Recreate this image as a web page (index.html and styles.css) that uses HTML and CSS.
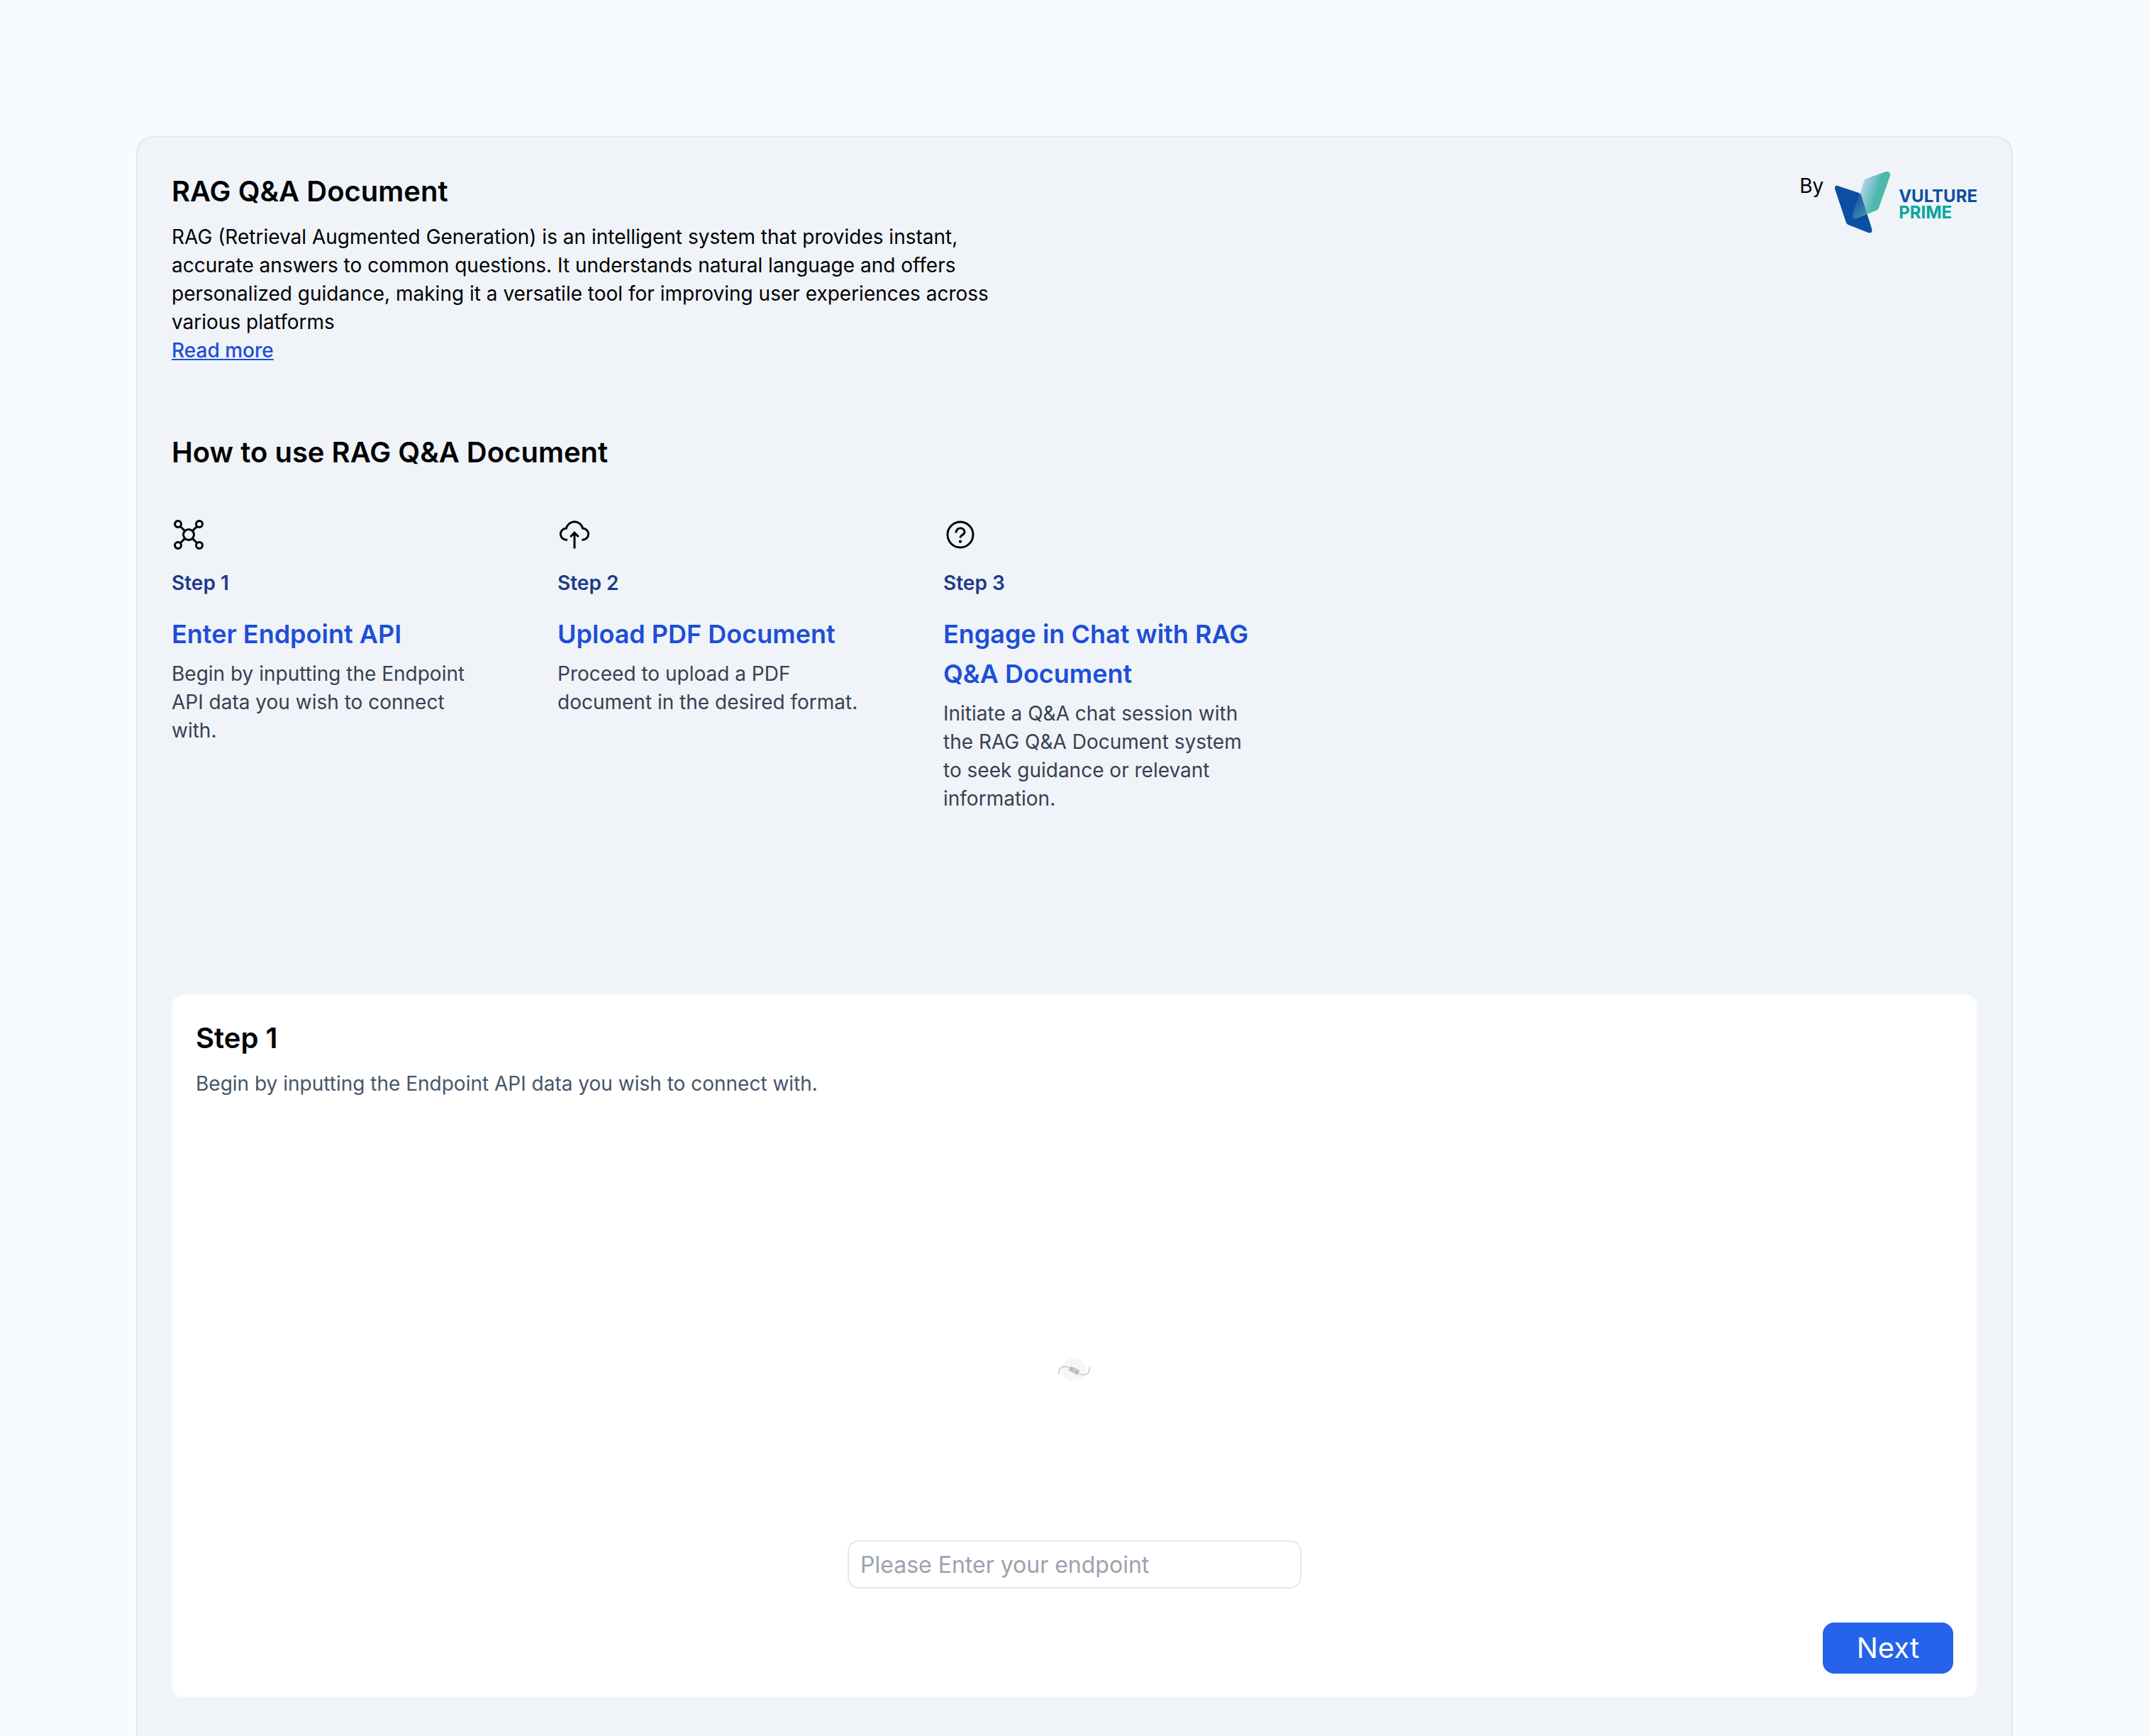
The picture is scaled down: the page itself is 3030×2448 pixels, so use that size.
FILE: index.html
```html
<!DOCTYPE html>
<html lang="en">
<head>
<meta charset="utf-8">
<meta name="viewport" content="width=device-width, initial-scale=1">
<title>RAG Q&amp;A Document</title>
<link rel="stylesheet" href="styles.css">
</head>
<body>
<div class="page">
  <main class="card">
    <header class="intro">
      <div class="intro-text">
        <h1 class="title">RAG Q&amp;A Document</h1>
        <p>RAG (Retrieval Augmented Generation) is an intelligent system that provides instant, accurate answers to common questions. It understands natural language and offers personalized guidance, making it a versatile tool for improving user experiences across various platforms</p>
        <a class="read-more" href="#">Read more</a>
      </div>
      <div class="byline">
        <span>By</span>
        <a class="brand" href="#" aria-label="Vulture Prime">
          <svg class="brand-mark" viewBox="0 0 78 87" aria-hidden="true">
            <defs>
              <linearGradient id="wing" gradientUnits="userSpaceOnUse" x1="36" y1="28" x2="58" y2="35">
                <stop offset="0" stop-color="#b4d0ea"/>
                <stop offset="1" stop-color="#4fb7ae"/>
              </linearGradient>
              <linearGradient id="overlap" gradientUnits="userSpaceOnUse" x1="30" y1="45" x2="46" y2="58">
                <stop offset="0" stop-color="#2360a8"/>
                <stop offset="1" stop-color="#3a8fa8"/>
              </linearGradient>
              <clipPath id="blue-shape">
                <path d="M4 20 34 30Q36 31 37 33L52 80Q54 88 47 86L19 75Q17 74 16 72L0 24Q0 19 4 20Z"/>
              </clipPath>
            </defs>
            <path fill="#0b4fa2" d="M4 20 34 30Q36 31 37 33L52 80Q54 88 47 86L19 75Q17 74 16 72L0 24Q0 19 4 20Z"/>
            <path fill="url(#wing)" d="M44 10 72 0Q79 -1 78 6L62 51Q61 54 58 55L30 66Q24 67 26 60L41 14Q42 11 44 10Z"/>
            <path fill="url(#overlap)" clip-path="url(#blue-shape)" d="M44 10 72 0Q79 -1 78 6L62 51Q61 54 58 55L30 66Q24 67 26 60L41 14Q42 11 44 10Z"/>
          </svg>
          <span class="brand-name">VULTURE<span class="brand-second">PRIME</span></span>
        </a>
      </div>
    </header>

    <section class="guide">
      <h2 class="title">How to use RAG Q&amp;A Document</h2>
      <ol class="steps">
        <li class="step">
          <svg class="icon" viewBox="0 0 24 24" aria-hidden="true">
            <circle cx="12" cy="12" r="3.75"/>
            <circle cx="4.5" cy="4.5" r="2.25"/><circle cx="19.5" cy="4.5" r="2.25"/>
            <circle cx="4.5" cy="19.5" r="2.25"/><circle cx="19.5" cy="19.5" r="2.25"/>
            <path d="M6.1 6.1 9.3 9.3M17.9 6.1 14.7 9.3M6.1 17.9 9.3 14.7M17.9 17.9 14.7 14.7"/>
          </svg>
          <span class="step-label">Step 1</span>
          <h3 class="step-title">Enter Endpoint API</h3>
          <p class="step-text">Begin by inputting the Endpoint API data you wish to connect with.</p>
        </li>
        <li class="step">
          <svg class="icon" viewBox="0 0 24 24" aria-hidden="true">
            <path d="M7 15.6h-.7a4.05 4.05 0 0 1-.1-8.1A5.95 5.95 0 0 1 17.8 7.5a4.05 4.05 0 0 1-.1 8.1H17.2M12 21.8V10.6M9.1 13.5 12 10.6l2.9 2.9"/>
          </svg>
          <span class="step-label">Step 2</span>
          <h3 class="step-title">Upload PDF Document</h3>
          <p class="step-text">Proceed to upload a PDF document in the desired format.</p>
        </li>
        <li class="step">
          <svg class="icon" viewBox="0 0 24 24" aria-hidden="true">
            <circle cx="12" cy="12" r="9"/>
            <path d="M9 10.7C8.8 6.4 15 6.5 15 10.1 15 12.2 12.1 12 12 14.2"/>
            <circle class="icon-dot" cx="12" cy="16.8" r="1.1"/>
          </svg>
          <span class="step-label">Step 3</span>
          <h3 class="step-title">Engage in Chat with RAG Q&amp;A Document</h3>
          <p class="step-text">Initiate a Q&amp;A chat session with the RAG Q&amp;A Document system to seek guidance or relevant information.</p>
        </li>
      </ol>
    </section>

    <form class="panel">
      <h2 class="title">Step 1</h2>
      <label class="panel-text" for="endpoint">Begin by inputting the Endpoint API data you wish to connect with.</label>
      <div class="stage">
        <svg class="plug" viewBox="0 0 48 48" aria-hidden="true">
          <ellipse cx="23" cy="23" rx="17" ry="16" fill="#f6f6f6"/>
          <path d="M1.700 30C1.500 20 8 17 16 20.500M31 29.500C39 33 46 29 45 19.500" fill="none" stroke="#c4c4c4" stroke-width="1.500"/>
          <path d="M18 18.500 24.200 20.800 21.800 27.800 15.800 24.600Z" fill="#bdbdbd"/>
          <path d="M25.200 21 31.200 24.800 28.800 31 22.500 28Z" fill="#bdbdbd"/>
          <path d="M19.500 28V36M22.500 30V38" stroke="#fff"/>
        </svg>
      </div>
      <input class="endpoint" id="endpoint" type="text" placeholder="Please Enter your endpoint">
      <button class="next" type="button">Next</button>
    </form>
  </main>
</div>
</body>
</html>
```
FILE: styles.css
```css
* {
  box-sizing: border-box;
  margin: 0;
  padding: 0;
}

body {
  background: #f7fbfe;
  color: #000;
  font: 28px/40px Inter, "Liberation Sans", sans-serif;
}

.page {
  height: 100vh;
  overflow-y: auto;
  scrollbar-width: none;
  padding: 192px;
}

.card {
  padding: 48px 48px 96px;
  background: #f0f4f9;
  border: 2px solid #e2e8f0;
  border-radius: 24px;
}

.title {
  font-size: 40px;
  font-weight: 600;
  line-height: 56px;
}

.intro {
  display: flex;
  justify-content: space-between;
  align-items: flex-start;
}

.intro-text {
  max-width: 1200px;
}

.intro-text .title {
  margin-bottom: 16px;
}

.read-more {
  display: block;
  width: fit-content;
  color: #1d4ed8;
  font-weight: 500;
}

.byline {
  display: flex;
  gap: 16px;
}

.brand {
  display: flex;
  align-items: center;
  gap: 12px;
  text-decoration: none;
}

.brand-mark {
  width: 78px;
  height: 87px;
}

.brand-name {
  padding-top: 4px;
  color: #0b4fa2;
  font-size: 24px;
  font-weight: 700;
  line-height: 23px;
}

.brand-second {
  display: block;
  color: #00a79d;
}

.guide {
  margin-top: 96px;
}

.steps {
  display: flex;
  gap: 96px;
  margin-top: 64px;
  list-style: none;
}

.step {
  width: 448px;
}

.icon {
  display: block;
  width: 48px;
  height: 48px;
  margin-bottom: 24px;
  fill: none;
  stroke: #000;
  stroke-width: 1.5;
}

.icon-dot {
  fill: #000;
  stroke: none;
}

.step-label {
  display: block;
  margin-bottom: 24px;
  color: #1e3a8a;
  font-weight: 600;
}

.step-title {
  margin-bottom: 8px;
  color: #1d4ed8;
  font-size: 36px;
  font-weight: 600;
  line-height: 56px;
}

.step-text {
  color: #374151;
}

.panel {
  display: flex;
  flex-direction: column;
  margin-top: 256px;
  padding: 32px;
  background: #fff;
  border: 2px solid #f8fafc;
  border-radius: 16px;
}

.panel-text {
  margin-top: 16px;
  color: #475569;
}

.stage {
  display: flex;
  justify-content: center;
  padding: 360px 0 216px;
}

.plug {
  width: 48px;
  height: 48px;
}

.endpoint {
  align-self: center;
  width: 640px;
  height: 68px;
  padding: 8px 16px;
  background: #fff;
  border: 2px solid #e5e7eb;
  border-radius: 16px;
  font: 32px/48px Inter, "Liberation Sans", sans-serif;
}

.endpoint::placeholder {
  color: #9ca3af;
}

.next {
  align-self: flex-end;
  margin-top: 48px;
  padding: 8px 48px;
  background: #2563eb;
  border: 0;
  border-radius: 16px;
  color: #fff;
  font: 40px/56px Inter, "Liberation Sans", sans-serif;
}
```
